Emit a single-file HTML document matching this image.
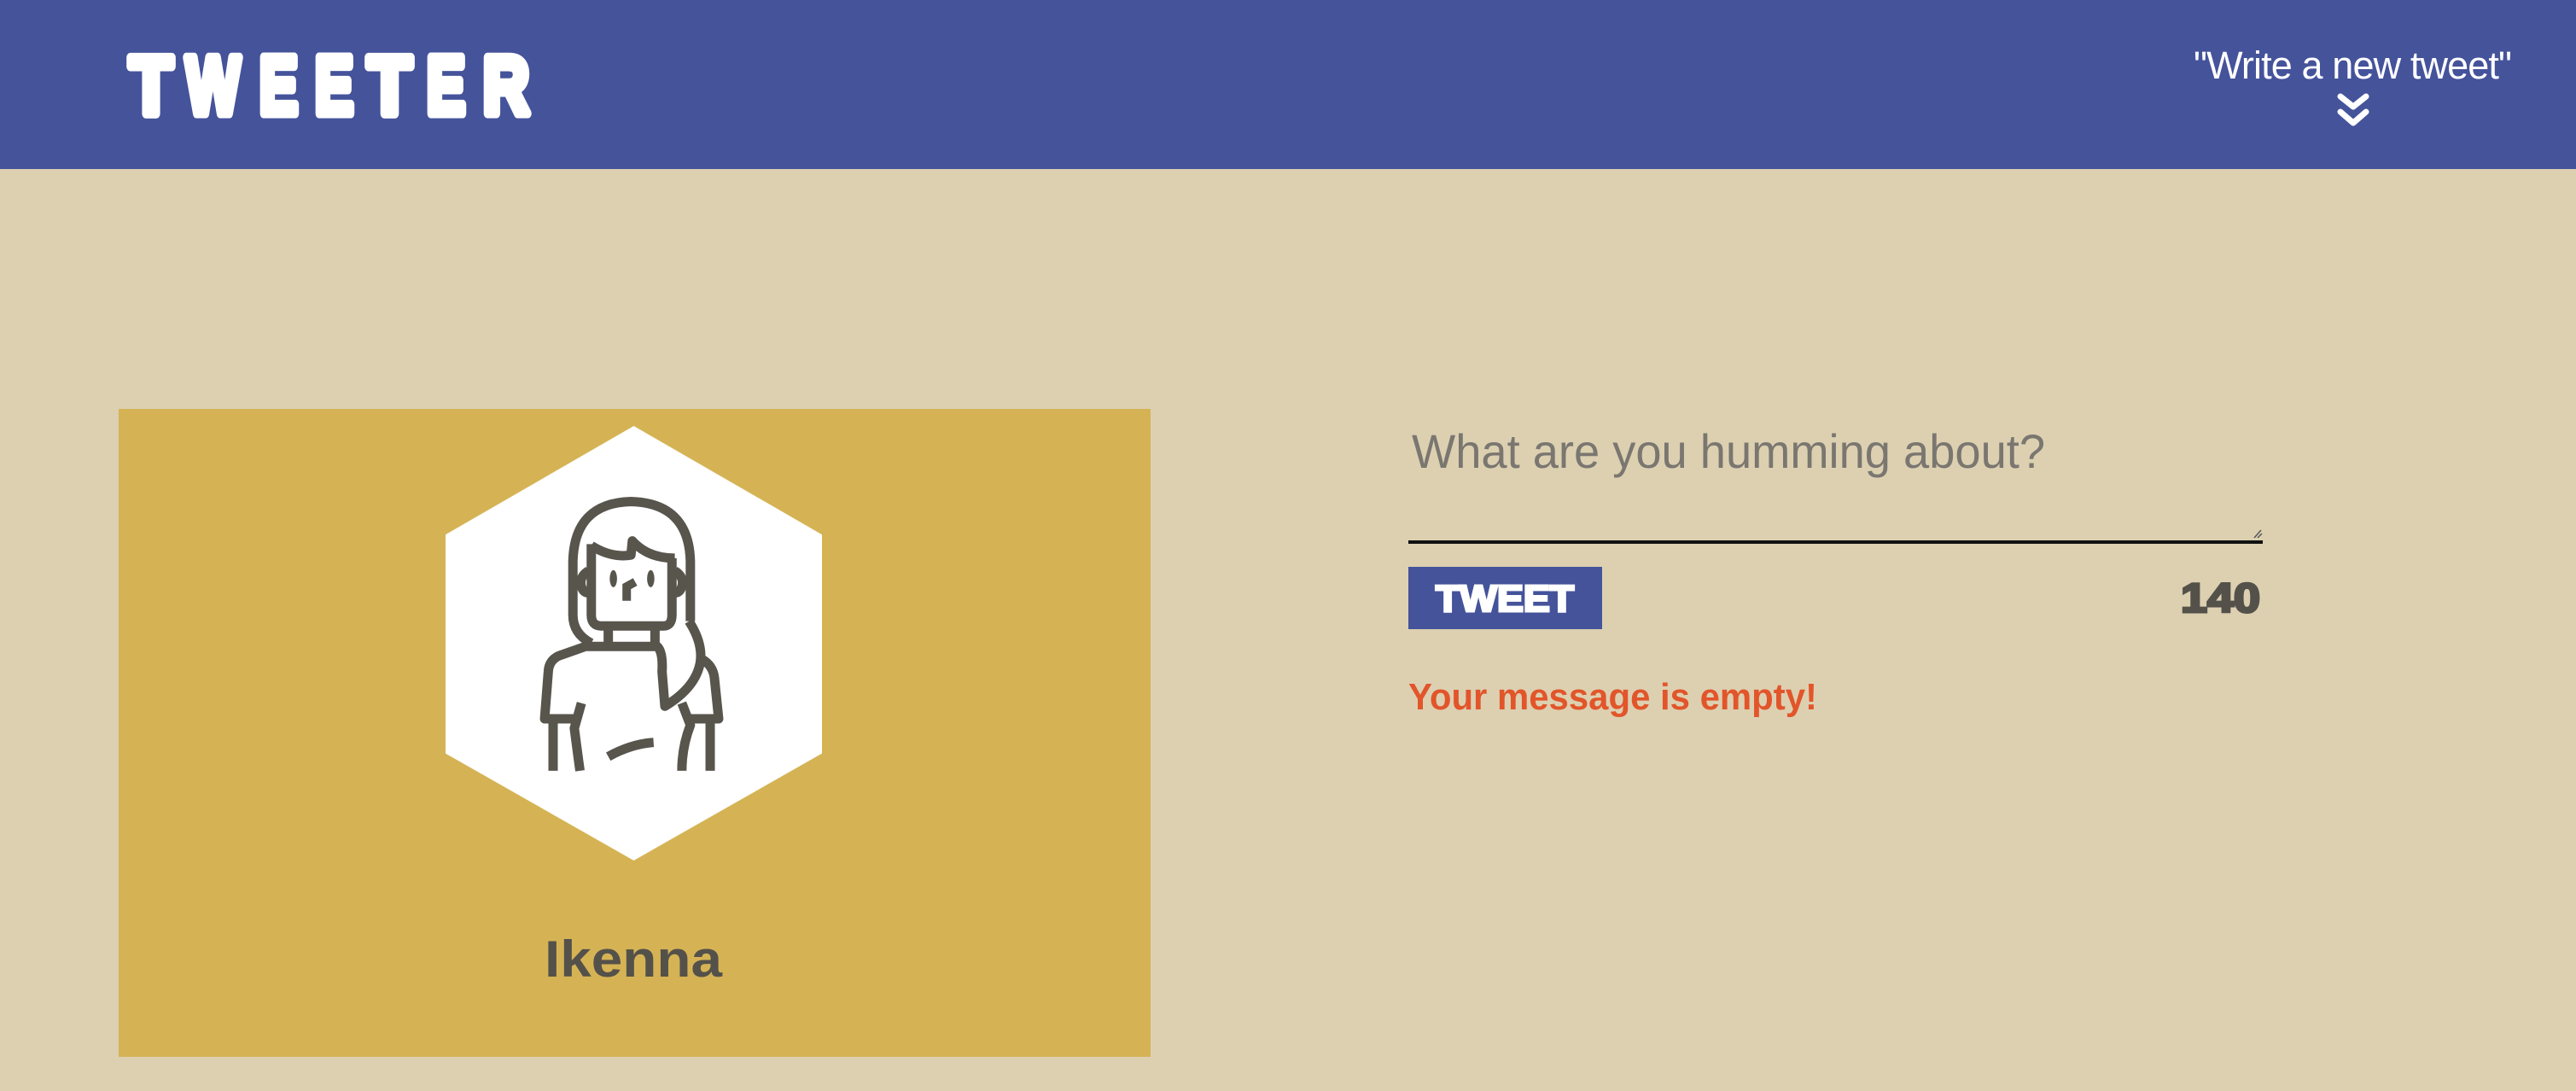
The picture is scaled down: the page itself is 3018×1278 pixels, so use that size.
<!DOCTYPE html>
<html><head><meta charset="utf-8"><style>
html,body{margin:0;padding:0}
body{width:3018px;height:1278px;overflow:hidden;background:#dcd0b1;position:relative;font-family:"Liberation Sans",sans-serif}
.hdr{position:absolute;left:0;top:0;width:3018px;height:198px;background:#45539b}
.card{position:absolute;left:139px;top:479px;width:1209px;height:759px;background:#d5b355}
.line{position:absolute;left:1650px;top:633px;width:1001px;height:4px;background:#111}
.btn{position:absolute;left:1650px;top:664px;width:227px;height:73px;background:#45539b}
svg{position:absolute;left:0;top:0}
</style></head><body>
<div class="hdr"></div>
<div class="card"></div>
<div class="line"></div>
<div class="btn"></div>
<svg width="3018" height="1278" viewBox="0 0 3018 1278">
 <g font-family="Liberation Sans" font-weight="900" font-size="96" fill="#fff" stroke="#fff" stroke-width="11" stroke-linejoin="round">
  <text x="152" y="133" textLength="50" lengthAdjust="spacingAndGlyphs">T</text>
  <text x="218" y="133" textLength="63" lengthAdjust="spacingAndGlyphs">W</text>
  <text x="304" y="133" textLength="45" lengthAdjust="spacingAndGlyphs">E</text>
  <text x="369" y="133" textLength="45" lengthAdjust="spacingAndGlyphs">E</text>
  <text x="431" y="133" textLength="51" lengthAdjust="spacingAndGlyphs">T</text>
  <text x="500" y="133" textLength="45" lengthAdjust="spacingAndGlyphs">E</text>
  <text x="566" y="133" textLength="54" lengthAdjust="spacingAndGlyphs">R</text>
 </g>
 <text x="2570" y="92" font-family="Liberation Sans" font-size="45" fill="#fff" textLength="373" lengthAdjust="spacing">"Write a new tweet"</text>
 <g fill="none" stroke="#fff" stroke-width="7" stroke-linecap="round" stroke-linejoin="round">
  <path d="M2742 113 L2757 125 L2772 113"/><path d="M2742 131 L2757 144 L2772 131"/>
 </g>
 <text x="1654" y="548" font-family="Liberation Sans" font-size="56" fill="#7a7670" textLength="742" lengthAdjust="spacingAndGlyphs">What are you humming about?</text>
 <path d="M2641 630 L2649 621 M2645 630 L2650 625" stroke="#555" stroke-width="1.5"/>
 <text x="1682" y="716" font-family="Liberation Sans" font-weight="900" font-size="44" fill="#fff" stroke="#fff" stroke-width="3" textLength="162" lengthAdjust="spacingAndGlyphs">TWEET</text>
 <text x="2555" y="717" font-family="Liberation Sans" font-weight="900" font-size="48" fill="#54514a" stroke="#54514a" stroke-width="3" textLength="93" lengthAdjust="spacingAndGlyphs">140</text>
 <text x="1650" y="831" font-family="Liberation Sans" font-weight="bold" font-size="44" fill="#e2552a" textLength="479" lengthAdjust="spacingAndGlyphs">Your message is empty!</text>
 <text x="742" y="1144" text-anchor="middle" font-family="Liberation Sans" font-weight="bold" font-size="60" fill="#54514a" textLength="208" lengthAdjust="spacingAndGlyphs">Ikenna</text>
</svg>
<svg style="left:522px;top:499px" width="441" height="509" viewBox="125 100 1330 1380" preserveAspectRatio="none">
 <polygon points="790,100 1455,445 1455,1140 790,1480 125,1140 125,445" fill="#fff"/>
 <g fill="none" stroke="#58554d" stroke-width="11" vector-effect="non-scaling-stroke" stroke-linejoin="round" stroke-linecap="butt">
  <path vector-effect="non-scaling-stroke" d="M640 790 Q575 760 575 700 V530 Q580 345 780 340 Q985 345 990 530 V720"/>
  <path vector-effect="non-scaling-stroke" d="M640 475 V700 Q640 735 675 735 H895 Q925 735 925 700 V520"/>
  <path vector-effect="non-scaling-stroke" d="M640 480 Q710 520 780 510 L785 465 Q840 520 935 520"/>
  <path vector-effect="non-scaling-stroke" d="M630 560 Q595 580 605 610 Q612 630 630 630"/>
  <path vector-effect="non-scaling-stroke" d="M935 560 Q970 580 960 610 Q953 630 935 630"/>
  <path vector-effect="non-scaling-stroke" d="M700 735 V790 M865 735 V795"/>
  <path vector-effect="non-scaling-stroke" d="M880 800 L620 800 L525 830 Q490 845 488 880 L475 1030 H590 M505 1030 V1195"/>
  <path vector-effect="non-scaling-stroke" d="M985 720 Q1035 790 1025 850 Q1010 930 900 990 L890 880 Q895 800 860 795"/>
  <path vector-effect="non-scaling-stroke" d="M1030 840 Q1070 860 1075 900 L1090 1030 H975 M1060 1030 V1195"/>
  <path vector-effect="non-scaling-stroke" d="M605 980 L580 1060 Q590 1130 600 1195"/>
  <path vector-effect="non-scaling-stroke" d="M960 980 L990 1050 Q960 1120 960 1195"/>
  <path vector-effect="non-scaling-stroke" d="M700 1150 Q780 1110 860 1105"/>
 </g>
 <g fill="#58554d">
  <ellipse cx="718" cy="585" rx="13" ry="27"/><ellipse cx="850" cy="585" rx="13" ry="27"/>
 </g>
 <path d="M795 595 L765 610 L765 655" fill="none" stroke="#58554d" stroke-width="10" vector-effect="non-scaling-stroke"/>
</svg>
</body></html>
